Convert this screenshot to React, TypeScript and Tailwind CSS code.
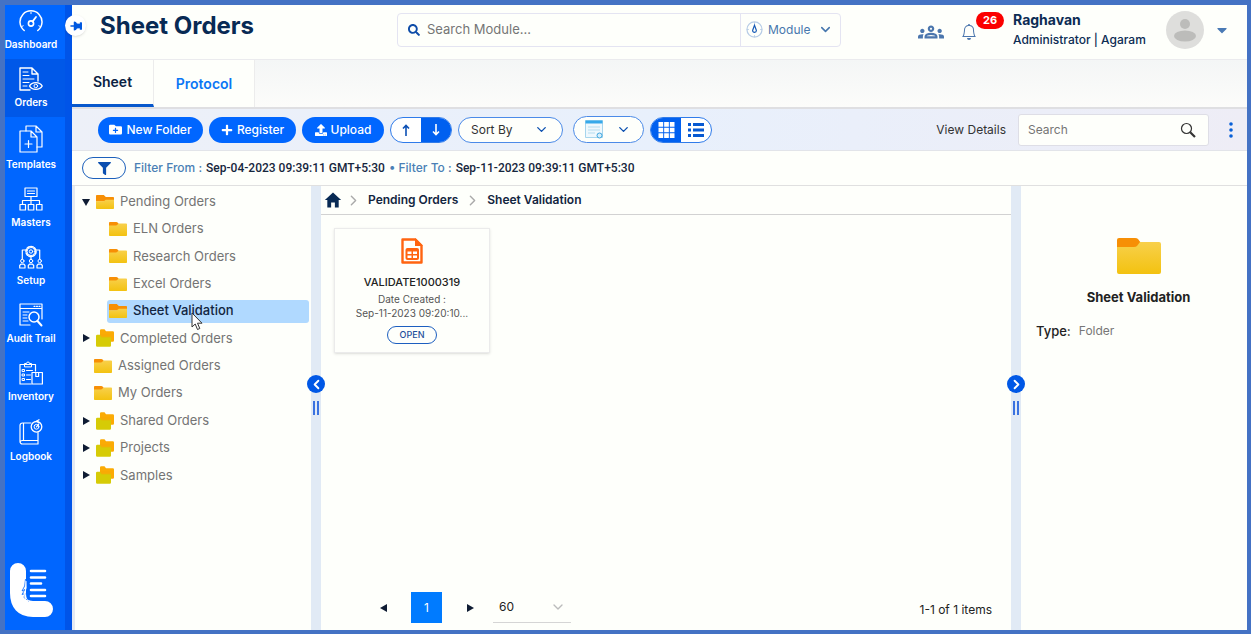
import type { ReactNode } from 'react';
import { FaSearch, FaThumbtack, FaPlus, FaUpload, FaFilter, FaFolderPlus, FaCaretDown } from 'react-icons/fa';
import { IoMdHome } from 'react-icons/io';
import { MdOutlineGroups } from 'react-icons/md';
import { BsBell } from 'react-icons/bs';
import { ChevronDown, ChevronLeft, ChevronRight } from 'lucide-react';

function LineIcon({ children, height = 24 }: { children: ReactNode; height?: number }) {
  return (
    <svg
      width="24"
      height={height}
      viewBox={`0 0 24 ${height}`}
      fill="none"
      stroke="currentColor"
      strokeWidth="1"
      strokeLinejoin="round"
      strokeLinecap="round"
      aria-hidden="true"
    >
      {children}
    </svg>
  );
}

const modules: { label: string; icon: ReactNode }[] = [
  {
    label: 'Dashboard',
    icon: (
      <LineIcon>
        <path d="M5.2 21.5A11 11 0 1 1 18.8 21.5" strokeWidth="1.5" />
        <path d="M2.8 17.5l1.4-.7M19.8 16.8l1.4.7M12 3.2v1.5" />
        <circle cx="12" cy="14.500" r="2.600" strokeWidth="1.600" />
        <path d="M13.500 12.600l3.500-4.600" strokeWidth="1.800" />
      </LineIcon>
    ),
  },
  {
    label: 'Orders',
    icon: (
      <LineIcon>
        <path d="M11 23H1V1h12l6 6v7M13 1v6h6" strokeWidth="1.400" />
        <path d="M4 5h5M4 8.500h6M4 12h11M4 15.500h6M4 19h4" />
        <path d="M10.500 19c2.500-4.500 10-4.500 12.700 0-2.700 4.500-10.200 4.500-12.700 0z" strokeWidth="1.400" />
        <circle cx="16.800" cy="19" r="1.800" />
      </LineIcon>
    ),
  },
  {
    label: 'Templates',
    icon: (
      <LineIcon height={28}>
        <path d="M7 6V1h10l6 6v15h-5M17 1v6h6" strokeWidth="1.200" />
        <path d="M1 6h11l6 6v15H1zM12 6v6h6" strokeWidth="1.200" />
        <path d="M9.500 15.500v7M6 19h7" strokeWidth="1.200" />
      </LineIcon>
    ),
  },
  {
    label: 'Masters',
    icon: (
      <LineIcon>
        <path d="M6 1h12v8.500H6zM8.500 4h7M8.500 6.500h7M12 9.500v8M3.500 17.500v-4h17v4" strokeWidth="1.200" />
        <path d="M1 17.500h5.500V23H1zM9.300 17.500h5.500V23H9.300zM17.500 17.500H23V23h-5.500z" strokeWidth="1.200" />
      </LineIcon>
    ),
  },
  {
    label: 'Setup',
    icon: (
      <LineIcon>
        <circle cx="12" cy="6.500" r="5" strokeWidth="1.600" strokeDasharray="2.400 1.400" />
        <circle cx="12" cy="6.500" r="4" />
        <circle cx="12" cy="6.500" r="1.700" />
        <path d="M7 5H3.300v9M17 5h3.700v9M12 11.500V14" strokeWidth="1.200" />
        <circle cx="3.300" cy="16" r="1.700" />
        <circle cx="12" cy="16" r="1.700" />
        <circle cx="20.700" cy="16" r="1.700" />
        <path d="M.7 23v-2.500l1.200-1.300h3l1.100 1.300V23zM9.300 23v-2.500l1.200-1.300h3l1.200 1.300V23zM18 23v-2.500l1.200-1.300h3l1.100 1.300V23z" strokeWidth="1.200" />
      </LineIcon>
    ),
  },
  {
    label: 'Audit Trail',
    icon: (
      <LineIcon>
        <path d="M11 22H1V1h22v15M1 5.500h22M15 3.300h1M17.500 3.300h1M20 3.300h1" strokeWidth="1.200" />
        <path d="M4 9h6M4 12h4M4 15h4M4 18h5" />
        <circle cx="15" cy="14" r="5" strokeWidth="1.500" />
        <path d="M18.500 18l4 4.500" strokeWidth="2" />
      </LineIcon>
    ),
  },
  {
    label: 'Inventory',
    icon: (
      <LineIcon>
        <path d="M12 23H1V3.500h15.500V10" strokeWidth="1.200" />
        <path d="M5.500 5.500v-3h2a1.500 1.500 0 0 1 3 0h2v3z" />
        <path d="M3.500 8.500h2v2h-2zM3.500 13h2v2h-2zM3.500 17.500h2v2h-2zM7.500 9.500h6M7.500 14h4M7.500 18.500h4" />
        <path d="M13 11.500h10.400V23H13zM16.800 11.500v4h2.800v-4" strokeWidth="1.200" />
      </LineIcon>
    ),
  },
  {
    label: 'Logbook',
    icon: (
      <LineIcon height={26}>
        <path d="M12 4H3.500A2.500 2.500 0 0 0 1 6.500v16A2.500 2.500 0 0 0 3.500 25H19V13.500M19 21.500H3.500a2.500 2.500 0 0 0-2.500 1.500M4.500 4v17" strokeWidth="1.200" />
        <circle cx="17.500" cy="7.800" r="5.300" strokeWidth="1.300" />
        <circle cx="17.500" cy="7.800" r="2.400" />
        <path d="M17.500 7.800l2-2.500M17.500 2.300l2.500-1.500M17.500 2.300l2.500 1.500" strokeWidth="1.300" />
      </LineIcon>
    ),
  },
];

type FolderKind = 'closed' | 'open' | 'stack';

function Folder({ kind, className = 'h-4 w-[18px]' }: { kind: FolderKind; className?: string }) {
  if (kind === 'stack') {
    return (
      <svg viewBox="0 0 18 18" className="h-[18px] w-[18px] shrink-0" aria-hidden="true">
        <path d="M4 1.500A1.200 1.200 0 0 1 5.200.3h3.300L10 2.300h6.800A1.200 1.200 0 0 1 18 3.500v8.100a1.200 1.200 0 0 1-1.200 1.200H4z" fill="#fbab05" />
        <path d="M0 7A1.200 1.200 0 0 1 1.200 5.800h3l1.500 2h8.100A1.200 1.200 0 0 1 15 9v7.600a1.200 1.200 0 0 1-1.200 1.200H1.200A1.200 1.200 0 0 1 0 16.600z" fill="#d6cb06" />
        <path d="M1 6.500h3l1.500 2h8.500V5H4v1.500z" fill="#f5a905" opacity=".5" />
      </svg>
    );
  }
  return (
    <svg viewBox="0 0 44 36" preserveAspectRatio="none" className={`${className} shrink-0`} aria-hidden="true">
      <defs>
        <linearGradient id="folder-front" x1="0" y1="0" x2="0" y2="1">
          <stop offset="0" stopColor="#f8d04b" />
          <stop offset="1" stopColor="#f3c210" />
        </linearGradient>
      </defs>
      {kind === 'open' ? (
        <>
          <path d="M0 2a2 2 0 0 1 2-2h17l5 5h18a2 2 0 0 1 2 2v10H0z" fill="#f78f05" />
          <path d="M0 16h19l5-4h20v22a2 2 0 0 1-2 2H2a2 2 0 0 1-2-2z" fill="url(#folder-front)" />
        </>
      ) : (
        <>
          <path d="M0 2a2 2 0 0 1 2-2h16q2 0 3 1l3 4-4 5H0z" fill="#f78f05" />
          <path d="M0 9h17q2 0 3-1l3-4h19a2 2 0 0 1 2 2v28a2 2 0 0 1-2 2H2a2 2 0 0 1-2-2z" fill="url(#folder-front)" />
        </>
      )}
    </svg>
  );
}

interface TreeNode {
  label: string;
  kind: FolderKind;
  child?: boolean;
  selected?: boolean;
}

const tree: TreeNode[] = [
  { label: 'Pending Orders', kind: 'open' },
  { label: 'ELN Orders', kind: 'closed', child: true },
  { label: 'Research Orders', kind: 'closed', child: true },
  { label: 'Excel Orders', kind: 'closed', child: true },
  { label: 'Sheet Validation', kind: 'open', child: true, selected: true },
  { label: 'Completed Orders', kind: 'stack' },
  { label: 'Assigned Orders', kind: 'closed' },
  { label: 'My Orders', kind: 'closed' },
  { label: 'Shared Orders', kind: 'stack' },
  { label: 'Projects', kind: 'stack' },
  { label: 'Samples', kind: 'stack' },
];

function Triangle({ direction }: { direction: 'down' | 'right' | 'left' }) {
  const shapes = { down: 'M0 1h8L4 8z', right: 'M1 0l7 4-7 4z', left: 'M7 0v8L0 4z' };
  return (
    <svg viewBox="0 0 8 8" className="size-2 shrink-0" fill="#0f1c33" aria-hidden="true">
      <path d={shapes[direction]} />
    </svg>
  );
}

function TreeRow({ node }: { node: TreeNode }) {
  const expandable = node.kind === 'stack' || (node.kind === 'open' && !node.child);
  if (node.child) {
    return (
      <li role="treeitem" aria-selected={!!node.selected} className="flex items-center pr-[2px] pl-8">
        <button
          className={`relative flex h-[23px] w-full items-center gap-[6px] rounded-[3px] pl-[2px] text-left ${
            node.selected ? 'bg-[#b0d9ff] font-medium text-[#12253f]' : ''
          }`}
        >
          <Folder kind={node.kind} className="h-[14px] w-[18px]" />
          {node.label}
          {node.selected && (
            <svg viewBox="0 0 12 19" className="absolute top-3 left-[84px] z-10 h-[19px] w-3" aria-hidden="true">
              <path d="M1 1v14l3.200-3 2.300 5.500 2.300-1-2.300-5.300H11z" fill="#fff" stroke="#333" />
            </svg>
          )}
        </button>
      </li>
    );
  }
  return (
    <li role="treeitem" aria-selected={false} className={`flex items-center ${expandable ? 'pl-[7px]' : 'pl-[19px]'}`}>
      <button className="flex items-center gap-[6px]">
        {expandable && <Triangle direction={node.kind === 'open' ? 'down' : 'right'} />}
        <Folder kind={node.kind} className="h-[14px] w-[18px]" />
        {node.label}
      </button>
    </li>
  );
}

function Splitter({ direction }: { direction: 'left' | 'right' }) {
  const Chevron = direction === 'left' ? ChevronLeft : ChevronRight;
  return (
    <div className="flex w-[10px] shrink-0 flex-col items-center bg-[#e1eaf5] pt-[189px]">
      <button aria-label={`Collapse ${direction} panel`} className="z-10 -mx-1 grid size-[18px] shrink-0 place-items-center rounded-full bg-[#0058e6] text-white">
        <Chevron size={15} strokeWidth={3} />
      </button>
      <div className="mt-2 h-[14px] w-[6px] border-x-2 border-[#3a72e0]" />
    </div>
  );
}

function Logo() {
  return (
    <svg viewBox="0 0 46 56" className="h-14 w-[46px]" fill="none" aria-hidden="true">
      <path d="M9 9v22q0 16 15 16h12" stroke="#fff" strokeWidth="16" strokeLinecap="round" />
      <path d="M16.500 17q0 8-3.500 12l3-1.500-3 5 3-1-1 4 5 4" stroke="#0066ff" strokeWidth=".8" />
      <path d="M17 19q1 8-1.500 12l1 7 5 1.500" stroke="#fff" strokeWidth="1" />
      <path d="M22 9h14M22 15.500h14M22 21.500h10M22 28h14M22 34h14" stroke="#fff" strokeWidth="2.600" strokeLinecap="round" />
    </svg>
  );
}

function Sidebar() {
  return (
    <aside className="relative flex w-[67px] shrink-0 flex-col justify-between border-r-[7px] border-[#0054e8] bg-[#0066ff] text-white">
      <nav aria-label="Modules">
        {modules.map((m, i) => (
          <a
            key={m.label}
            href={`#${m.label.toLowerCase().replace(' ', '-')}`}
            className={`flex flex-col items-center gap-1 pr-2 pb-2 text-[10px] leading-[14px] font-semibold whitespace-nowrap ${
              i === 0 ? 'pt-1' : 'pt-2'
            } ${m.label === 'Orders' ? 'bg-[#0058e8]' : ''}`}
          >
            {m.icon}
            {m.label}
          </a>
        ))}
      </nav>
      <div className="pb-3 pl-1">
        <Logo />
      </div>
      <button aria-label="Unpin menu" className="absolute top-[10px] -right-[21px] z-20 grid size-[21px] place-items-center rounded-full bg-white text-[#0058e0] shadow-sm">
        <FaThumbtack className="rotate-90" size={12} />
      </button>
    </aside>
  );
}

function Header() {
  return (
    <header className="flex h-[55px] items-center border-b border-[#ebebee] pr-[17px] pl-7">
      <h1 className="w-[297px] pb-3 text-2xl leading-8 font-bold whitespace-nowrap text-[#082a54]">Sheet Orders</h1>
      <div className="mt-[-5px] flex h-[34px] w-[444px] items-center rounded border border-[#e4e4f2] text-[13px]">
        <label htmlFor="module-search" className="pl-[10px] text-[#0e4ca8]">
          <FaSearch size={12} aria-label="Search modules" />
        </label>
        <input id="module-search" placeholder="Search Module..." className="min-w-0 flex-1 bg-transparent pl-[7px] outline-none placeholder:text-[#757575]" />
        <div className="relative flex h-full w-[100px] items-center border-l border-[#e4e4f2] pl-[5px] text-xs text-[#4777ae]">
          <svg viewBox="0 0 18 18" className="size-[17px] shrink-0" fill="none" aria-hidden="true">
            <circle cx="9" cy="9" r="8" stroke="#b7cce6" strokeWidth="1.300" />
            <path d="M9 1v2M1 9h2M15 9h2M9 15v2" stroke="#b7cce6" />
            <path d="M9 4.500l2 5.500a2 2 0 1 1-4 0z" stroke="#1458b5" strokeWidth="1.200" />
          </svg>
          <select aria-label="Search scope" className="w-full appearance-none bg-transparent pl-[5px] outline-none">
            <option>Module</option>
          </select>
          <ChevronDown size={15} strokeWidth={2.500} className="pointer-events-none absolute right-[7px]" />
        </div>
      </div>
      <div className="mt-[-4px] ml-auto flex items-center">
        <button aria-label="Groups" className="mt-1 text-[#4b76ad]">
          <MdOutlineGroups size={26} />
        </button>
        <button aria-label="Notifications, 26 unread" className="relative mt-1 ml-[17px] text-[#4b76ad]">
          <BsBell size={16} />
          <span className="absolute -top-[12px] left-[15px] rounded-full bg-[#fb0000] px-[7px] text-[11px] leading-[17px] font-bold text-white">26</span>
        </button>
        <div className="ml-9 w-[137px] overflow-hidden whitespace-nowrap text-[#0c2c54]">
          <p className="text-sm leading-5 font-bold">Raghavan</p>
          <p className="text-xs leading-5 font-medium">Administrator | Agaram</p>
        </div>
        <svg viewBox="0 0 38 38" className="ml-4 size-[38px] shrink-0" aria-hidden="true">
          <circle cx="19" cy="19" r="19" fill="#dededc" />
          <circle cx="19" cy="13" r="5" fill="#bcbcba" />
          <ellipse cx="19" cy="25" rx="11" ry="5.500" fill="#bcbcba" />
        </svg>
        <button aria-label="Account menu" className="ml-[10px] text-[#4a7ab5]">
          <FaCaretDown size={16} />
        </button>
      </div>
    </header>
  );
}

function Tabs() {
  return (
    <div role="tablist" className="flex h-[49px] border-b-2 border-[#dfdfe2] bg-gradient-to-b from-[#f4f6f6] to-[#fcfcfa] text-sm font-semibold">
      <button role="tab" aria-selected="true" className="w-[82px] border-r border-b-[3px] border-r-[#ececec] border-b-[#0758cc] bg-[#fefffb] text-[#0b2242]">
        Sheet
      </button>
      <button role="tab" aria-selected="false" className="w-[101px] border-r border-[#ececec] bg-[#fefffb] text-[#0b76f5]">
        Protocol
      </button>
    </div>
  );
}

function PrimaryButton({ icon, children, className }: { icon: ReactNode; children: ReactNode; className: string }) {
  return (
    <button className={`flex h-[26px] shrink-0 items-center justify-center gap-1 rounded-full bg-[#0066ff] text-xs font-medium whitespace-nowrap text-white ${className}`}>
      {icon}
      {children}
    </button>
  );
}

function Arrow({ up }: { up?: boolean }) {
  return (
    <svg viewBox="0 0 10 12" className={`h-3 w-[10px] ${up ? '' : 'rotate-180'}`} fill="none" stroke="currentColor" strokeWidth="1.600" aria-hidden="true">
      <path d="M5 12V1.500M2 4.500L5 1.500l3 3" />
    </svg>
  );
}

function Toolbar() {
  return (
    <div className="flex h-[42px] items-center border-b border-[#e2e4e9] bg-gradient-to-r from-[#edf0f8] via-[#e8f0fc] to-[#eeedf6] pr-2 pl-[26px]">
      <div className="flex items-center gap-[6px]">
        <PrimaryButton className="w-[105px]" icon={<FaFolderPlus size={13} />}>New Folder</PrimaryButton>
        <PrimaryButton className="w-[87px]" icon={<FaPlus size={12} />}>Register</PrimaryButton>
        <PrimaryButton className="w-[82px]" icon={<FaUpload size={12} />}>Upload</PrimaryButton>
        <div className="flex h-[26px] w-[62px] overflow-hidden rounded-full border border-[#2f7bea] bg-white">
          <button aria-label="Sort ascending" className="grid flex-1 place-items-center text-[#0b4fb5]"><Arrow up /></button>
          <button aria-label="Sort descending" className="grid flex-1 place-items-center bg-[#0060f0] text-white"><Arrow /></button>
        </div>
        <div className="relative flex h-[26px] w-[105px] items-center rounded-full border border-[#4b8ae8] bg-[#fefffb]">
          <select aria-label="Sort by" className="h-full w-full appearance-none bg-transparent pl-3 text-xs text-[#333] outline-none">
            <option>Sort By</option>
          </select>
          <ChevronDown size={15} strokeWidth={2.200} className="pointer-events-none absolute right-[13px] text-[#0c50b0]" />
        </div>
        <button aria-label="Template type" className="ml-1 flex h-[27px] w-[71px] items-center justify-between rounded-full border border-[#4b8ae8] bg-[#fefffb] pr-3 pl-[11px] text-[#0c50b0]">
          <svg viewBox="0 0 19 19" className="size-[19px]" fill="none" aria-hidden="true">
            <path d="M.5.500h17v17H.5z" fill="#eef8fd" stroke="#a6d5ed" />
            <path d="M.5.500h17v3H.5z" fill="#36a9ea" />
            <path d="M3 7h12M3 10h12M3 13h7" stroke="#b5dcef" />
            <circle cx="14.500" cy="15.500" r="2.500" fill="#d6eefa" stroke="#3ea6df" />
          </svg>
          <ChevronDown size={15} strokeWidth={2.200} />
        </button>
        <div className="flex h-[26px] w-[62px] overflow-hidden rounded-full border border-[#2f7bea] bg-white">
          <button aria-label="Grid view" className="grid flex-1 place-items-center bg-[#0060f0]">
            <svg viewBox="0 0 17 17" className="h-4 w-[17px]" fill="#fff" aria-hidden="true">
              <path d="M0 0h5v5H0zM6 0h5v5H6zM12 0h5v5h-5zM0 6h5v5H0zM6 6h5v5H6zM12 6h5v5h-5zM0 12h5v5H0zM6 12h5v5H6zM12 12h5v5h-5z" />
            </svg>
          </button>
          <button aria-label="List view" className="grid flex-1 place-items-center">
            <svg viewBox="0 0 16 14" className="h-[14px] w-4" fill="#0759d2" aria-hidden="true">
              <path d="M0 0h3v3H0zM5 0h11v3H5zM0 5.500h3v3H0zM5 5.500h11v3H5zM0 11h3v3H0zM5 11h11v3H5z" />
            </svg>
          </button>
        </div>
      </div>
      <button className="ml-auto text-xs whitespace-nowrap text-[#333]">View Details</button>
      <div className="ml-3 flex h-8 w-[191px] items-center rounded-[3px] border border-[#dedee6] bg-[#fefffb] pr-3 pl-[9px]">
        <input aria-label="Search orders" placeholder="Search" className="min-w-0 flex-1 bg-transparent text-xs outline-none placeholder:text-[#757575]" />
        <svg viewBox="0 0 16 16" className="size-4" fill="none" stroke="#333" aria-hidden="true">
          <circle cx="6.500" cy="6.500" r="5" strokeWidth="1.200" />
          <path d="M10.200 10.200L15 15" strokeWidth="2.200" />
        </svg>
      </div>
      <button aria-label="More actions" className="ml-[14px] grid w-4 place-items-center">
        <svg viewBox="0 0 4 16" className="h-4 w-1" fill="#0860d8" aria-hidden="true">
          <circle cx="2" cy="2" r="1.800" />
          <circle cx="2" cy="8" r="1.800" />
          <circle cx="2" cy="14" r="1.800" />
        </svg>
      </button>
    </div>
  );
}

function FilterBar() {
  return (
    <div className="flex h-[35px] items-center border-b border-[#e0e0e0] pl-[10px] text-[#16263d]">
      <button aria-label="Filter" className="mr-2 grid h-[22px] w-11 place-items-center rounded-full border border-[#1c60bb] text-[#0b4fb0]">
        <FaFilter size={13} />
      </button>
      <p className="flex gap-1 font-[Roboto,sans-serif] text-xs font-medium whitespace-nowrap">
        <span className="font-[Inter,sans-serif] text-[#4a7fb5]">Filter From :</span>
        <time>Sep-04-2023 09:39:11 GMT+5:30</time>
        <span className="font-[Inter,sans-serif] text-[#4a7fb5]">• Filter To :</span>
        <time>Sep-11-2023 09:39:11 GMT+5:30</time>
      </p>
    </div>
  );
}

function OrderCard() {
  return (
    <article className="flex w-[156px] flex-col items-center border border-[#ebebeb] pt-[9px] pb-2 whitespace-nowrap shadow-sm">
      <svg viewBox="0 0 22 26" className="h-[26px] w-[22px]" aria-hidden="true">
        <path d="M1.500 1.500h13l6 6v17h-19z" fill="none" stroke="#ff6410" strokeWidth="2.400" strokeLinejoin="round" />
        <path d="M14 0l8 8h-8z" fill="#ff6410" />
        <rect x="4.500" y="10" width="13.500" height="12" rx="2" fill="#ff6410" />
        <path d="M6.500 13.500h4v2.500h-4zM12 13.500h4v2.500h-4zM6.500 17.500h4V20h-4zM12 17.500h4V20h-4z" fill="#fff" />
      </svg>
      <h2 className="mt-2 text-[11px] leading-5 font-medium text-[#222]">VALIDATE1000319</h2>
      <p className="text-[10px] leading-[14px] text-[#555]">Date Created :</p>
      <p className="text-[10px] leading-[14px] text-[#555]">Sep-11-2023 09:20:10...</p>
      <button className="mt-[6px] h-[18px] w-[50px] rounded-full border border-[#1d5fc0] text-[9px] leading-4 font-medium text-[#1d4f9c]">OPEN</button>
    </article>
  );
}

function Pager() {
  return (
    <footer className="flex items-center pr-[19px] pb-[7px] pl-[58px] text-xs text-[#222]">
      <button aria-label="Previous page" className="w-8 pl-px"><Triangle direction="left" /></button>
      <button aria-current="page" className="size-[31px] bg-[#007bff] text-white">1</button>
      <button aria-label="Next page" className="ml-6"><Triangle direction="right" /></button>
      <div className="relative ml-[19px] flex h-[30px] w-[78px] items-center border-b border-[#d5d5d5]">
        <select aria-label="Items per page" className="w-full appearance-none bg-transparent pl-[6px] text-xs outline-none">
          <option>60</option>
        </select>
        <ChevronDown size={16} className="pointer-events-none absolute right-[5px] text-[#bbb]" />
      </div>
      <p className="mt-1 ml-auto">1-1 of 1 items</p>
    </footer>
  );
}

export default function App() {
  return (
    <div className="flex min-h-screen border-t-[5px] border-r-4 border-b-4 border-l-[5px] border-[#4472c4] bg-[#fefffb] font-[Inter,'Open_Sans',sans-serif]">
      <Sidebar />
      <div className="flex min-w-0 flex-1 flex-col">
        <Header />
        <Tabs />
        <Toolbar />
        <FilterBar />
        <main className="flex flex-1">
          <section aria-label="Folders" className="w-[239px] shrink-0 border-l-[3px] border-[#e4e9f2] pt-[2px]">
            <ul role="tree" className="grid h-[301px] auto-rows-fr text-[13px] text-[#747474]">
              {tree.map((node) => (
                <TreeRow key={node.label} node={node} />
              ))}
            </ul>
          </section>
          <Splitter direction="left" />
          <section aria-label="Orders" className="flex min-w-0 flex-1 flex-col">
            <nav aria-label="Breadcrumb" className="flex h-[29px] items-center border-b border-[#d2d2d2] pl-[2px] text-xs font-semibold text-[#12253f]">
              <a href="#home" aria-label="Home" className="text-[#082a54]"><IoMdHome size={20} /></a>
              <ChevronRight size={17} className="ml-[2px] text-[#aaa]" />
              <a href="#pending-orders" className="mx-[6px]">Pending Orders</a>
              <ChevronRight size={17} className="text-[#aaa]" />
              <a href="#sheet-validation" className="ml-[6px]">Sheet Validation</a>
            </nav>
            <div className="flex-1 p-[13px]">
              <OrderCard />
            </div>
            <Pager />
          </section>
          <Splitter direction="right" />
          <section aria-label="Details" className="w-[226px] shrink-0 pt-[52px]">
            <div className="flex flex-col items-center pl-[9px]">
              <Folder kind="closed" className="h-9 w-11" />
              <h2 className="mt-[13px] text-[13px] leading-5 font-bold text-[#222]">Sheet Validation</h2>
            </div>
            <dl className="mt-[14px] flex items-center gap-2 pl-[15px] text-[13px] leading-5">
              <dt className="font-medium text-[#222]">Type:</dt>
              <dd className="text-xs leading-5 text-[#777]">Folder</dd>
            </dl>
          </section>
        </main>
      </div>
    </div>
  );
}
